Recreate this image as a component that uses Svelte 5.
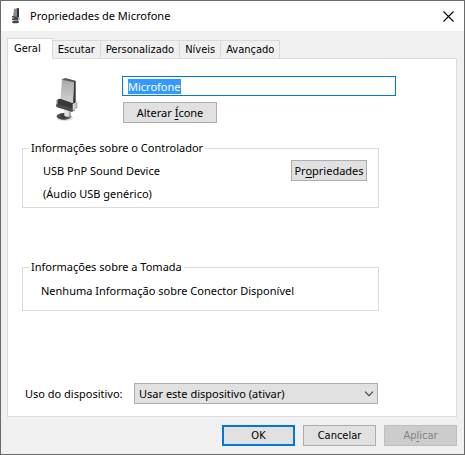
<script>
  import { onMount } from "svelte";

  const tabs = ["Geral", "Escutar", "Personalizado", "Níveis", "Avançado"];

  let selectedTab = $state("Geral");
  let deviceName = $state("Microfone");
  let usage = $state("on");
  let nameInput;

  onMount(() => {
    nameInput.focus();
    nameInput.select();
  });
</script>

<main class="dialog">
  <header class="titlebar">
    <svg class="title-icon" viewBox="0 0 16 16">
      <path d="M6 1l4-1v9H5z" fill="#8a8a8a" />
      <path d="M9 0l2 .5V9H9z" fill="#333" />
      <path d="M4 8l7 1v3l-2 1-5-1z" fill="#4a4a4a" />
      <path d="M4 9h1.500v2H4zM10 9h1.500v3H10z" fill="#aaa" />
      <path d="M7 12h2v2H7z" fill="#bbb" />
      <ellipse cx="7.500" cy="14" rx="3.500" ry="1.300" fill="#444" />
    </svg>
    <h1>Propriedades de Microfone</h1>
    <button class="close" aria-label="Fechar">
      <svg viewBox="0 0 11 11"><path d="M.5.5l10 10M10.5.5l-10 10" stroke="#000" stroke-width="1.1" /></svg>
    </button>
  </header>

  <div class="content">
    <div class="tabs" role="tablist">
      {#each tabs as tab}
        <button
          class="tab"
          class:selected={tab === selectedTab}
          role="tab"
          aria-selected={tab === selectedTab}
          onclick={() => (selectedTab = tab)}>{tab}</button>
      {/each}
    </div>

    <section class="panel">
      <div class="device">
        <svg class="device-icon" viewBox="18 12 96 144">
          <defs>
            <linearGradient id="metal" x1="0" y1="0" x2="0" y2="1">
              <stop offset="0" stop-color="#a8a8a8" />
              <stop offset="1" stop-color="#d6d6d6" />
            </linearGradient>
            <linearGradient id="base" x1="0" y1="0" x2="1" y2="0">
              <stop offset="0" stop-color="#555" />
              <stop offset=".5" stop-color="#3a3a3a" />
              <stop offset="1" stop-color="#777" />
            </linearGradient>
          </defs>
          <ellipse cx="51" cy="138" rx="24" ry="9" fill="#ddd" />
          <ellipse cx="48" cy="133" rx="22" ry="10" fill="url(#base)" />
          <path d="M49 112h19v20q-9 5-19 0z" fill="#e2e2e2" />
          <path d="M62 116h6v16l-6 2z" fill="#aaa" />
          <path d="M42 22l10-4 31 8-5 5z" fill="#555" />
          <path d="M77 30l6-4v66l-9 5z" fill="#333" />
          <path d="M42 22l36 8-3 68-38-14z" fill="url(#metal)" />
          <path d="M42 22l36 8" stroke="#444" stroke-width="2" />
          <path d="M24 85l8-5v25l-8-3z" fill="#bdbdbd" />
          <path d="M29 82l8-2 36 13 8-3v25l-8 4-45-14z" fill="#393939" />
          <path d="M25 96l47 13v10l-47-14z" fill="#4c4c4c" />
          <path d="M74 96l14-8v19l-14 11z" fill="#d2d2d2" />
          <path d="M82 92l6-4v19l-6 4z" fill="#b2b2b2" />
        </svg>
        <div class="device-fields">
          <input class="name" aria-label="Nome do dispositivo" bind:this={nameInput} bind:value={deviceName} />
          <button class="btn change-icon">Alterar <u>Í</u>cone</button>
        </div>
      </div>

      <fieldset class="driver">
        <legend>Informações sobre o Controlador</legend>
        <div class="driver-text">
          <p>USB PnP Sound Device</p>
          <p>(Áudio USB genérico)</p>
        </div>
        <button class="btn properties">Pr<u>o</u>priedades</button>
      </fieldset>

      <fieldset class="jack">
        <legend>Informações sobre a Tomada</legend>
        <p>Nenhuma Informação sobre Conector Disponível</p>
      </fieldset>

      <div class="usage">
        <label for="usage">Uso do dispositivo:</label>
        <div class="select-wrap">
          <select id="usage" bind:value={usage}>
            <option value="on">Usar este dispositivo (ativar)</option>
            <option value="off">Não usar este dispositivo (desativar)</option>
          </select>
          <svg class="chevron" viewBox="0 0 10 6"><path d="M1 .7l4 4 4-4" fill="none" stroke="#444" stroke-width="1.2" /></svg>
        </div>
      </div>
    </section>

    <footer class="actions">
      <button class="btn default">OK</button>
      <button class="btn">Cancelar</button>
      <button class="btn" disabled>Ap<u>l</u>icar</button>
    </footer>
  </div>
</main>

<style>
  :global(body) {
    margin: 0;
  }
  .dialog {
    box-sizing: border-box;
    display: flex;
    flex-direction: column;
    min-height: 100vh;
    border: 1px solid #6b6a6b;
    background: #f0f0f0;
    color: #000;
    font: 11px/16px "Noto Sans", "Open Sans", sans-serif;
  }
  button,
  input,
  select {
    box-sizing: border-box;
    margin: 0;
    border-radius: 0;
    color: inherit;
    font: inherit;
  }
  p {
    margin: 0;
  }
  u {
    text-underline-offset: 2px;
  }

  .titlebar {
    display: flex;
    align-items: center;
    height: 30px;
    padding: 0 10px 0 7px;
    background: #fff;
  }
  .title-icon {
    width: 16px;
    height: 16px;
    margin-right: 6px;
  }
  h1 {
    flex: 1;
    margin: 0;
    font-size: 11px;
    font-weight: 400;
  }
  .close {
    display: flex;
    padding: 0;
    border: 0;
    background: none;
  }
  .close svg {
    width: 11px;
    height: 11px;
  }

  .content {
    display: flex;
    flex: 1;
    flex-direction: column;
    padding: 7px 7px 8px 6px;
  }
  .tabs,
  .actions {
    font-family: "DejaVu Sans Condensed", "Noto Sans", sans-serif;
  }
  .tabs {
    display: flex;
    align-items: flex-end;
  }
  .tab {
    height: 18px;
    padding: 0 5px;
    border: 1px solid #d9d9d9;
    border-width: 1px 1px 0 0;
    background: #f0f0f0;
    line-height: 17px;
  }
  .tab.selected {
    z-index: 1;
    height: 21px;
    margin-bottom: -1px;
    padding: 0 11px 2px 6px;
    border-left-width: 1px;
    background: #fff;
  }

  .panel {
    display: flex;
    flex: 1;
    flex-direction: column;
    padding: 17px 14px 12px;
    border: 1px solid #dcdcdc;
    background: #fff;
  }
  .device {
    display: flex;
    margin-bottom: 16px;
  }
  .device-icon {
    width: 32px;
    height: 48px;
    margin: 0 36px 0 32px;
  }
  .device-fields {
    flex: 1;
    margin-right: 46px;
  }
  .name {
    display: block;
    width: 100%;
    height: 20px;
    padding: 0 5px;
    border: 1px solid #0078d7;
    outline: none;
    background: #fff;
    line-height: 13px;
  }
  .name::selection {
    background: #3399ff;
    color: #fff;
  }

  .btn {
    height: 21px;
    padding: 0;
    border: 1px solid #adadad;
    background: #e1e1e1;
  }
  .change-icon {
    width: 94px;
    margin: 6px 0 0 1px;
  }
  .properties {
    width: 76px;
  }

  fieldset {
    display: flex;
    justify-content: space-between;
    align-items: flex-start;
    box-sizing: border-box;
    margin: 0 63px 0 0;
    border: 1px solid #dcdcdc;
  }
  legend {
    padding: 0 2px;
  }
  .driver {
    height: 68px;
    padding: 4px 11px 0 6px;
  }
  .driver-text {
    display: grid;
    gap: 7px;
    padding: 3px 0 0 14px;
  }
  .jack {
    height: 52px;
    margin-top: 51px;
    padding: 8px 18px 0 6px;
  }
  .jack p {
    padding-left: 12px;
  }

  .usage {
    display: flex;
    align-items: center;
    margin: auto 63px 0 0;
    padding-left: 3px;
  }
  .usage label {
    width: 109px;
  }
  .select-wrap {
    position: relative;
    flex: 1;
    margin-right: 1px;
  }
  select {
    display: block;
    width: 100%;
    height: 21px;
    padding: 0 20px 0 4px;
    border: 1px solid #adadad;
    background: #e1e1e1;
    appearance: none;
  }
  .chevron {
    position: absolute;
    top: 8px;
    right: 4px;
    width: 10px;
    height: 6px;
    pointer-events: none;
  }

  .actions {
    display: flex;
    justify-content: flex-end;
    gap: 8px;
    margin-top: 8px;
  }
  .actions .btn {
    width: 73px;
  }
  .actions .default {
    border: 2px solid #0078d7;
  }
  .btn:disabled {
    border-color: #bfbfbf;
    background: #ccc;
    color: #838383;
  }
</style>
